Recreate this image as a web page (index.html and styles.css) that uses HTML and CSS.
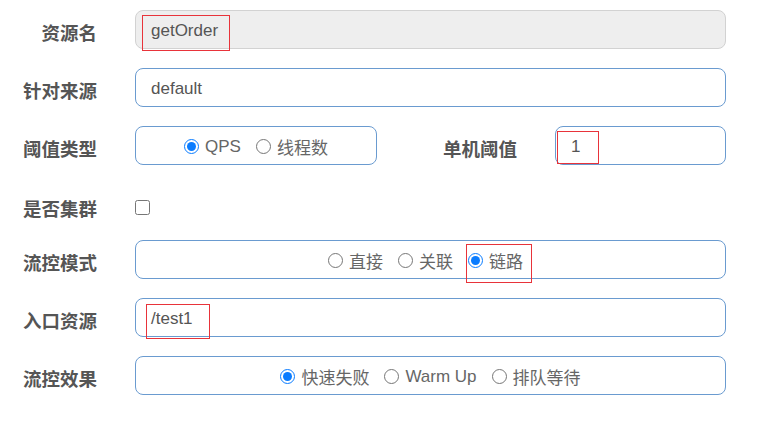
FILE: index.html
```html
<!DOCTYPE html>
<html lang="zh">
<head>
<meta charset="utf-8">
<link rel="stylesheet" href="styles.css">
</head>
<body>
<form class="form">
  <div class="row">
    <label class="lbl">资源名</label>
    <div class="field disabled"><span class="val">getOrder</span><span class="mark mark-res"></span></div>
  </div>
  <div class="row">
    <label class="lbl">针对来源</label>
    <div class="field"><span class="val">default</span></div>
  </div>
  <div class="row">
    <label class="lbl">阈值类型</label>
    <div class="field radios narrow">
      <label class="opt"><input type="radio" name="grade" checked>QPS</label>
      <label class="opt"><input type="radio" name="grade">线程数</label>
    </div>
    <label class="lbl lbl2">单机阈值</label>
    <div class="field"><span class="val">1</span><span class="mark mark-count"></span></div>
  </div>
  <div class="row row-check">
    <label class="lbl">是否集群</label>
    <input class="check" type="checkbox">
  </div>
  <div class="row">
    <label class="lbl">流控模式</label>
    <div class="field radios shifted">
      <label class="opt"><input type="radio" name="strategy">直接</label>
      <label class="opt"><input type="radio" name="strategy">关联</label>
      <label class="opt"><input type="radio" name="strategy" checked>链路</label>
      <span class="mark mark-chain"></span>
    </div>
  </div>
  <div class="row">
    <label class="lbl">入口资源</label>
    <div class="field"><span class="val">/test1</span><span class="mark mark-entry"></span></div>
  </div>
  <div class="row">
    <label class="lbl">流控效果</label>
    <div class="field radios">
      <label class="opt"><input type="radio" name="effect" checked>快速失败</label>
      <label class="opt"><input type="radio" name="effect">Warm Up</label>
      <label class="opt"><input type="radio" name="effect">排队等待</label>
    </div>
  </div>
</form>
</body>
</html>
```

FILE: styles.css
```css
* { box-sizing: border-box; }
html, body { margin: 0; background: #fff; }
body {
  font-family: "Liberation Sans", "Noto Sans CJK SC", sans-serif;
  color: #555;
}
.form {
  width: 726px;
  padding-top: 10px;
  display: flex;
  flex-direction: column;
  gap: 19px;
}
.row {
  display: flex;
  align-items: center;
  height: 39px;
}
.lbl {
  width: 97px;
  flex: none;
  margin-right: 38px;
  text-align: right;
  font-family: "Noto Sans CJK SC", sans-serif;
  font-weight: 700;
  font-size: 18.5px;
  color: #555;
  padding-top: 4px;
}
.lbl2 { width: 140px; }
.field {
  position: relative;
  flex: 1;
  height: 39px;
  border: 1.5px solid #6a9bd0;
  border-radius: 8px;
  display: flex;
  align-items: center;
  padding-left: 15px;
  font-size: 17px;
  color: #555;
}
.field.disabled {
  background: #eee;
  border-color: #d2d2d2;
}
.val { padding-top: 2px; }
.radios {
  justify-content: center;
  padding-left: 0;
  gap: 15px;
  color: #666;
  font-family: "Liberation Sans", "Noto Sans CJK SC", sans-serif;
}
.radios.shifted { padding-right: 10px; }
.narrow { flex: none; width: 242px; }
.opt {
  position: relative;
  display: flex;
  align-items: center;
  gap: 6px;
  padding-top: 2px;
}
.opt input {
  margin: 0;
  width: 15px;
  height: 15px;
  accent-color: #0a7cff;
}
.row-check { height: 37px; align-items: flex-start; }
.row-check .lbl { padding-top: 11px; }
.check {
  margin: 16px 0 0;
  width: 15px;
  height: 15px;
}
.mark {
  position: absolute;
  border: 1px solid #e8333a;
  pointer-events: none;
}
.mark-res { left: 6px; top: 3.5px; width: 88px; height: 36px; }
.mark-count { left: 0.5px; top: 3.5px; width: 42px; height: 33px; }
.mark-entry { left: 10px; top: 4.5px; width: 64px; height: 35px; }
.mark-chain { left: 329.5px; top: 2.5px; width: 66px; height: 39px; }
```
